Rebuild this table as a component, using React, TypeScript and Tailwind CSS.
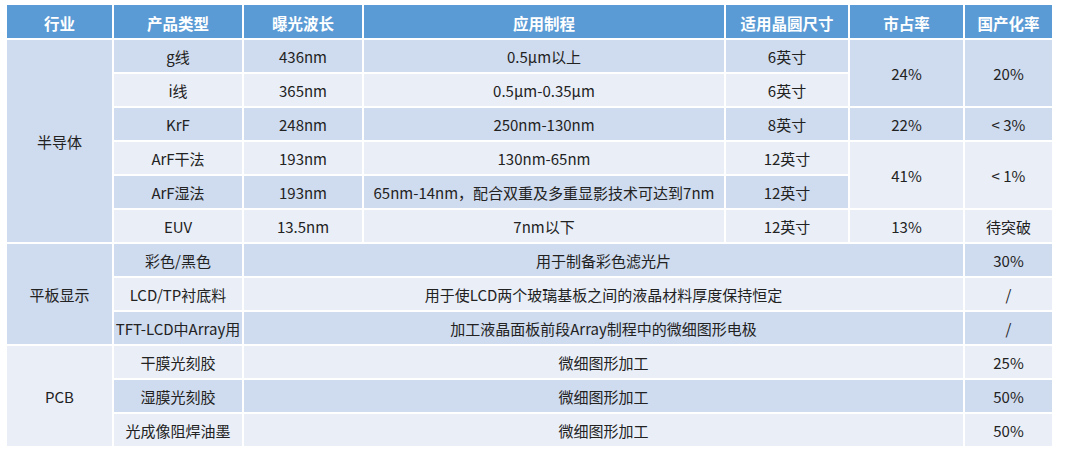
import React from 'react';

type Cell = { text: string; dark: boolean; rowSpan?: number; colSpan?: number };

const D = true;
const L = false;

const headers = ['行业', '产品类型', '曝光波长', '应用制程', '适用晶圆尺寸', '市占率', '国产化率'];
const colWidths = [105, 128, 118, 360, 122, 113, 87];

const rows: Cell[][] = [
  [
    { text: '半导体', dark: D, rowSpan: 6 },
    { text: 'g线', dark: D },
    { text: '436nm', dark: D },
    { text: '0.5μm以上', dark: D },
    { text: '6英寸', dark: D },
    { text: '24%', dark: D, rowSpan: 2 },
    { text: '20%', dark: D, rowSpan: 2 },
  ],
  [
    { text: 'i线', dark: L },
    { text: '365nm', dark: L },
    { text: '0.5μm-0.35μm', dark: L },
    { text: '6英寸', dark: L },
  ],
  [
    { text: 'KrF', dark: D },
    { text: '248nm', dark: D },
    { text: '250nm-130nm', dark: D },
    { text: '8英寸', dark: D },
    { text: '22%', dark: D },
    { text: '< 3%', dark: D },
  ],
  [
    { text: 'ArF干法', dark: L },
    { text: '193nm', dark: L },
    { text: '130nm-65nm', dark: L },
    { text: '12英寸', dark: L },
    { text: '41%', dark: L, rowSpan: 2 },
    { text: '< 1%', dark: L, rowSpan: 2 },
  ],
  [
    { text: 'ArF湿法', dark: D },
    { text: '193nm', dark: D },
    { text: '65nm-14nm，配合双重及多重显影技术可达到7nm', dark: D },
    { text: '12英寸', dark: D },
  ],
  [
    { text: 'EUV', dark: L },
    { text: '13.5nm', dark: L },
    { text: '7nm以下', dark: L },
    { text: '12英寸', dark: L },
    { text: '13%', dark: L },
    { text: '待突破', dark: L },
  ],
  [
    { text: '平板显示', dark: D, rowSpan: 3 },
    { text: '彩色/黑色', dark: D },
    { text: '用于制备彩色滤光片', dark: D, colSpan: 4 },
    { text: '30%', dark: D },
  ],
  [
    { text: 'LCD/TP衬底料', dark: L },
    { text: '用于使LCD两个玻璃基板之间的液晶材料厚度保持恒定', dark: L, colSpan: 4 },
    { text: '/', dark: L },
  ],
  [
    { text: 'TFT-LCD中Array用', dark: D },
    { text: '加工液晶面板前段Array制程中的微细图形电极', dark: D, colSpan: 4 },
    { text: '/', dark: D },
  ],
  [
    { text: 'PCB', dark: L, rowSpan: 3 },
    { text: '干膜光刻胶', dark: L },
    { text: '微细图形加工', dark: L, colSpan: 4 },
    { text: '25%', dark: L },
  ],
  [
    { text: '湿膜光刻胶', dark: D },
    { text: '微细图形加工', dark: D, colSpan: 4 },
    { text: '50%', dark: D },
  ],
  [
    { text: '光成像阻焊油墨', dark: L },
    { text: '微细图形加工', dark: L, colSpan: 4 },
    { text: '50%', dark: L },
  ],
];

const App: React.FC = () => {
  return (
    <div
      className="w-[1080px] h-[453px] bg-white pl-[5px] pt-[3px] overflow-hidden"
      style={{ fontFamily: '"Noto Sans CJK SC", "Noto Sans", sans-serif' }}
    >
      <table className="table-fixed border-separate border-spacing-0.5 w-[1049px] text-[15px] text-[#222222]">
        <colgroup>
          {colWidths.map((w, i) => (
            <col key={i} style={{ width: w }} />
          ))}
        </colgroup>
        <thead>
          <tr>
            {headers.map(h => (
              <th key={h} className="h-[33px] p-0 pt-[4px] bg-[#5b9bd5] text-white font-bold text-[15.5px] text-center align-middle leading-none">
                {h}
              </th>
            ))}
          </tr>
        </thead>
        <tbody>
          {rows.map((row, ri) => (
            <tr key={ri}>
              {row.map((cell, ci) => (
                <td
                  key={ci}
                  rowSpan={cell.rowSpan}
                  colSpan={cell.colSpan}
                  className={`h-[32px] p-0 text-center align-middle leading-none whitespace-nowrap ${
                    cell.dark ? 'bg-[#cfdbee]' : 'bg-[#e9eef7]'
                  }`}
                >
                  {cell.text}
                </td>
              ))}
            </tr>
          ))}
        </tbody>
      </table>
    </div>
  );
};

export default App;
